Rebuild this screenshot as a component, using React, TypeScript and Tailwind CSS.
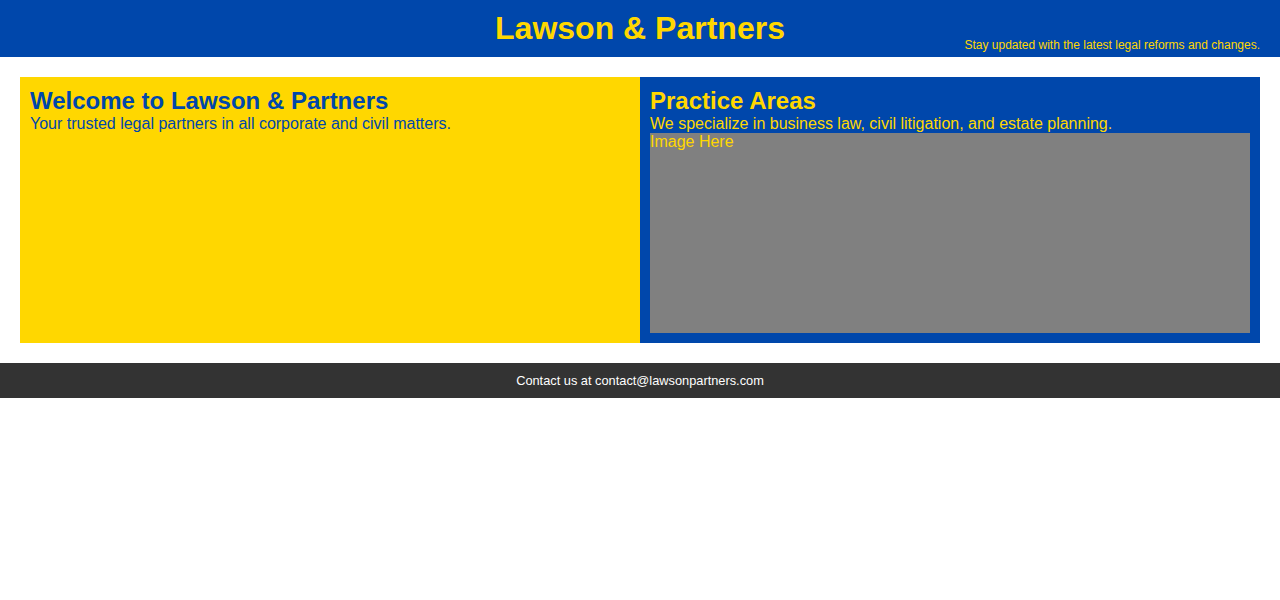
import React from "react";

export default function App() {
  return (
    <div className="min-h-[600px] bg-white" style={{ fontFamily: '"Liberation Sans", Arial, sans-serif' }}>
      <header className="relative bg-[#0047AB] p-[10px] text-center">
        <h1 className="m-0 text-[32px] leading-[37px] font-bold text-[#FFD700]">Lawson &amp; Partners</h1>
        <div className="absolute right-[20px] bottom-[5px] text-[12px] leading-[14px] text-[#FFD700]">
          Stay updated with the latest legal reforms and changes.
        </div>
      </header>
      <main className="flex p-[20px]">
        <section className="w-1/2 bg-[#FFD700] p-[10px] text-[#0047AB]">
          <h2 className="m-0 text-[24px] leading-[28px] font-bold">Welcome to Lawson &amp; Partners</h2>
          <p className="m-0 text-[16px] leading-[18px]">Your trusted legal partners in all corporate and civil matters.</p>
        </section>
        <section className="w-1/2 bg-[#0047AB] p-[10px] text-[#FFD700]">
          <h2 className="m-0 text-[24px] leading-[28px] font-bold">Practice Areas</h2>
          <p className="m-0 text-[16px] leading-[18px]">We specialize in business law, civil litigation, and estate planning.</p>
          <div className="h-[200px] w-full bg-[#808080] text-[16px] leading-[18px] text-[#FFD700]">Image Here</div>
        </section>
      </main>
      <footer className="bg-[#333333] p-[10px] text-center text-[12.8px] leading-[15px] text-white">
        Contact us at contact@lawsonpartners.com
      </footer>
    </div>
  );
}
